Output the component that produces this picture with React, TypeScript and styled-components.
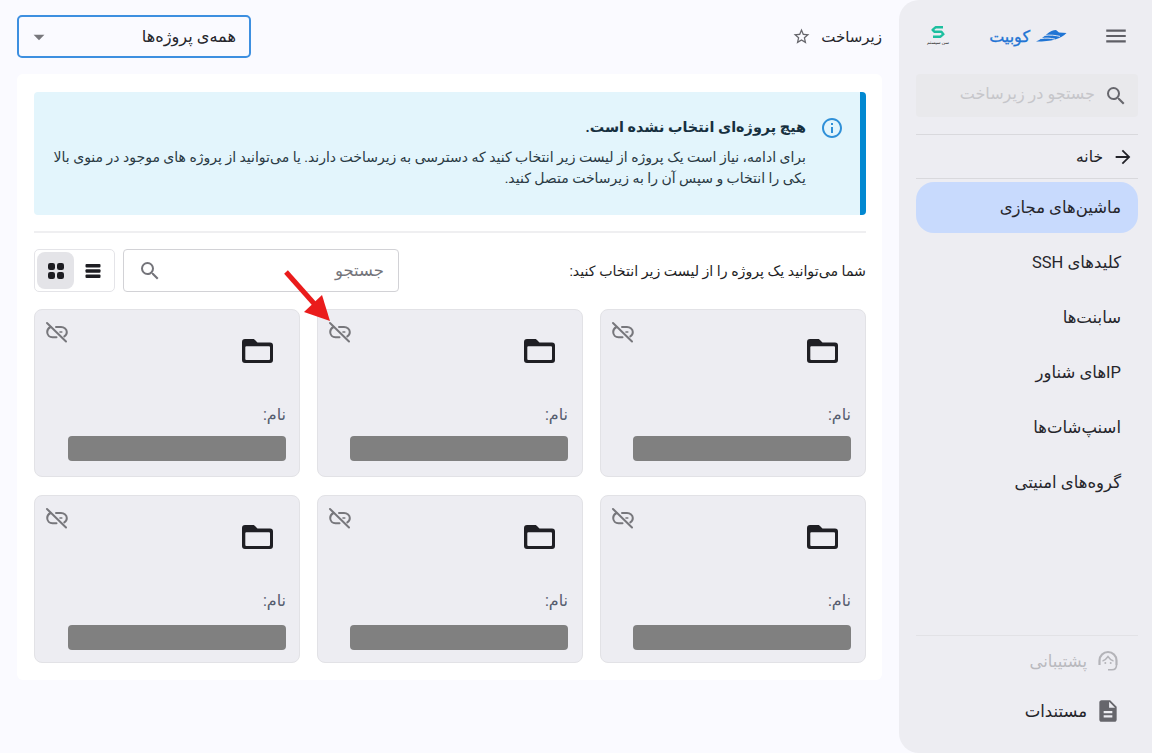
import { createGlobalStyle } from "styled-components";
import styled from "styled-components";
import {
  MdArrowDropDown,
  MdArrowForward,
  MdDescription,
  MdInfoOutline,
  MdMenu,
  MdSearch,
  MdStarBorder,
} from "react-icons/md";

const GlobalStyle = createGlobalStyle`
  html, body { margin: 0; padding: 0; height: 100%; }
  body {
    background: #fafaff;
    font-family: Roboto, "DejaVu Sans", sans-serif;
    color: #1e1e24;
    overflow: hidden;
  }
`;

const Page = styled.div`
  display: flex;
  direction: rtl;
  width: 1152px;
  height: 753px;
  position: relative;
`;

const Sidebar = styled.aside`
  width: 253px;
  height: 753px;
  box-sizing: border-box;
  flex: none;
  background: #ededf2;
  border-top-left-radius: 20px;
  border-bottom-left-radius: 20px;
  padding: 0 14px 0 17px;
  display: flex;
  flex-direction: column;
`;

const BrandRow = styled.div`
  height: 74px;
  display: flex;
  align-items: center;
  padding: 0 9px 2px 0;
  box-sizing: border-box;
`;

const MenuButton = styled.span`
  display: flex;
  color: #5f5f66;
  width: 26px;
  margin-left: 36px;
`;

const BrandName = styled.span`
  display: flex;
  align-items: center;
  gap: 6px;
  color: #1f74d4;
  font-size: 16px;
  -webkit-text-stroke: 0.3px #1f74d4;
  width: 80px;
  flex: none;
`;

const PartnerLogo = styled.span`
  display: flex;
  flex-direction: column;
  align-items: center;
  margin-right: 37px;
  width: 24px;
`;

const PartnerText = styled.span`
  font-size: 4.5px;
  line-height: 7px;
  margin-top: 1px;
  white-space: nowrap;
  color: #222;
`;

const SearchBox = styled.div`
  height: 43px;
  border-radius: 4px;
  background: #e9e9ec;
  display: flex;
  align-items: center;
  gap: 9px;
  padding: 0 10px;
  color: #67676d;
  font-size: 16px;
`;

const SearchHint = styled.span`
  color: #c6c6ca;
  padding-bottom: 4px;
`;

const SearchRule = styled.div`
  height: 1px;
  background: #d9d9dd;
  margin-top: 17px;
`;

const Rule = styled.div<{ $soft?: boolean }>`
  height: 1px;
  background: ${(p) => (p.$soft ? "#e2e2e6" : "#d9d9dd")};
`;

const HomeRow = styled.div`
  height: 43px;
  display: flex;
  align-items: center;
  gap: 9px;
  padding: 0 4px;
  font-size: 15.5px;
  color: #222228;
`;

const NavList = styled.nav`
  display: flex;
  flex-direction: column;
  gap: 4px;
  margin-top: 3px;
  flex: 1;
`;

const NavItem = styled.div<{ $active?: boolean }>`
  height: 51px;
  display: flex;
  align-items: center;
  padding: 0 17px 0 0;
  border-radius: 18px;
  font-size: 16.5px;
  color: #26262c;
  background: ${(p) => (p.$active ? "#c8dafd" : "transparent")};
`;

const SupportBlock = styled.div`
  display: flex;
  flex-direction: column;
  padding-bottom: 17px;
`;

const FootRow = styled.div<{ $muted?: boolean }>`
  height: 50px;
  display: flex;
  align-items: center;
  gap: 8px;
  padding: 0 17px 0 0;
  font-size: 16.5px;
  color: ${(p) => (p.$muted ? "#b9b9be" : "#24242a")};
`;

const FootIcon = styled.span`
  width: 26px;
  display: flex;
  justify-content: center;
`;

const Main = styled.main`
  flex: 1;
  min-width: 0;
  padding: 15px 17px 0;
  display: flex;
  flex-direction: column;
  gap: 16px;
`;

const TopBar = styled.header`
  height: 43px;
  display: flex;
  align-items: center;
  justify-content: space-between;
`;

const PageTitle = styled.div`
  display: flex;
  align-items: center;
  gap: 10px;
  font-size: 15px;
  color: #26262c;
`;

const ProjectSelect = styled.div`
  width: 234px;
  height: 43px;
  box-sizing: border-box;
  border: 2px solid #3d8fe0;
  border-radius: 5px;
  display: flex;
  align-items: center;
  justify-content: space-between;
  padding: 0 13px 0 7px;
  font-size: 16.2px;
  color: #26262c;
`;

const Panel = styled.section`
  background: #fff;
  border-radius: 6px;
  height: 606px;
  box-sizing: border-box;
  padding: 18px 16px 0 17px;
  display: flex;
  flex-direction: column;
`;

const Notice = styled.div`
  height: 123px;
  box-sizing: border-box;
  background: #e3f5fc;
  border-right: 6px solid #0288d1;
  border-radius: 4px;
  display: flex;
  gap: 14px;
  padding: 25px 16px 0 14px;
`;

const NoticeIcon = styled.span`
  display: flex;
  color: #2f90d8;
  flex: none;
  margin-top: -1px;
  height: 24px;
`;

const NoticeTitle = styled.div`
  font-size: 14.4px;
  font-weight: 700;
  line-height: 22px;
  color: #17303f;
`;

const NoticeBody = styled.div`
  font-size: 14px;
  line-height: 21px;
  margin-top: 8px;
  color: #2a3a44;
  white-space: nowrap;
`;

const PanelRule = styled.div`
  height: 2px;
  background: #efeff1;
  margin-top: 16px;
`;

const Toolbar = styled.div`
  height: 43px;
  margin-top: 16px;
  display: flex;
  align-items: center;
  justify-content: space-between;
  font-size: 14.2px;
  color: #1e1e24;
`;

const ToolGroup = styled.div`
  display: flex;
  gap: 8px;
`;

const FilterBox = styled.div`
  width: 276px;
  height: 43px;
  box-sizing: border-box;
  border: 1px solid #d2d2d6;
  border-radius: 4px;
  display: flex;
  align-items: center;
  justify-content: space-between;
  padding: 0 14px;
  font-size: 16.5px;
  color: #74747a;
`;

const ViewToggle = styled.div`
  width: 81px;
  height: 43px;
  box-sizing: border-box;
  border: 1px solid #e4e4e8;
  border-radius: 5px;
  display: flex;
  align-items: center;
  justify-content: space-between;
  padding: 0 3px 0 2px;
`;

const ToggleButton = styled.span<{ $on?: boolean }>`
  width: 37px;
  height: 37px;
  border-radius: 8px;
  display: flex;
  align-items: center;
  justify-content: center;
  background: ${(p) => (p.$on ? "#e4e4e8" : "transparent")};
`;

const ProjectGrid = styled.div`
  display: grid;
  grid-template-columns: repeat(3, 266px);
  grid-template-rows: repeat(2, 168px);
  column-gap: 17px;
  row-gap: 18px;
  margin-top: 17px;
`;

const ProjectCard = styled.article<{ $narrow?: boolean }>`
  background: #ededf2;
  border: 1px solid #e2e2e6;
  border-radius: 8px;
  box-sizing: border-box;
  padding: ${(p) => (p.$narrow ? "0 14px 0 32px" : "0 13px 0 33px")};
  display: flex;
  flex-direction: column;
`;

const CardTop = styled.div<{ $narrow?: boolean }>`
  height: 78px;
  display: flex;
  justify-content: space-between;
  align-items: flex-start;
  margin-left: ${(p) => (p.$narrow ? "-22px" : "-23px")};
  margin-right: 12px;
`;

const FolderGlyph = styled.svg`
  margin-top: 29px;
  margin-right: 1px;
  flex: none;
`;

const LinkGlyph = styled.svg`
  margin-top: 11px;
  flex: none;
`;

const NameLabel = styled.div`
  font-size: 16px;
  line-height: 20px;
  margin-top: 17px;
  color: #565c6e;
`;

const NameMask = styled.div<{ $low?: boolean }>`
  height: 25px;
  margin-top: ${(p) => (p.$low ? "14px" : "11px")};
  border-radius: 4px;
  background: #808080;
`;

const PointerArrow = styled.svg`
  position: absolute;
  left: 280px;
  top: 266px;
`;

const FolderIcon = () => (
  <FolderGlyph width="31" height="24" viewBox="0 0 31 24" fill="#1f1f24">
    <path
      fillRule="evenodd"
      d="M3 0 H11 C12 0 12.5 .5 13 1 L15.5 3.5 H28 A3 3 0 0 1 31 6.5 V21 A3 3 0 0 1 28 24 H3 A3 3 0 0 1 0 21 V3 A3 3 0 0 1 3 0 Z M4.3 7.3 A1 1 0 0 0 3.3 8.3 V20 A1 1 0 0 0 4.3 21 H27 A1 1 0 0 0 28 20 V8.3 A1 1 0 0 0 27 7.3 Z"
    />
  </FolderGlyph>
);

const LinkOffIcon = () => (
  <LinkGlyph width="24" height="22" viewBox="-1 -1 24 22" fill="none" stroke="#77777c" strokeWidth="2" strokeLinecap="round">
    <path d="M1 1 L20 19.5" />
    <path d="M4.5 5 C2.5 6 1.2 8 1.2 10 C1.2 13 3.5 15.2 6.5 15.2 H10.5" />
    <path d="M10 5 H15 C18.2 5 20.8 7.3 20.8 10 C20.8 12 19.8 13.5 18.3 14.4" />
    <path d="M14 10 H15.8" strokeWidth="1.6" />
  </LinkGlyph>
);

const GridIcon = () => (
  <svg width="18" height="18" viewBox="0 0 18 18" fill="#1d1d22">
    <rect x="1" y="1" width="7" height="7" rx="2.2" />
    <rect x="10" y="1" width="7" height="7" rx="2.2" />
    <rect x="1" y="10" width="7" height="7" rx="2.2" />
    <rect x="10" y="10" width="7" height="7" rx="2.2" />
  </svg>
);

const RowsIcon = () => (
  <svg width="18" height="18" viewBox="0 0 18 18" fill="#1d1d22">
    <rect x="1.5" y="2" width="15" height="3.4" rx="1" />
    <rect x="1.5" y="7.3" width="15" height="3.4" rx="1" />
    <rect x="1.5" y="12.6" width="15" height="3.4" rx="1" />
  </svg>
);

const BoatLogo = () => (
  <svg width="31" height="12" viewBox="0 0 31 12" fill="#1f74d4">
    <path d="M11 4 C14 1.5 17 0 20 0 L23 2.6 L30.5 3 C28 6 24 8 19 9.4 C14 10.8 8 11.6 0 11.6 C4.5 9.5 8 6.5 11 4Z" />
    <path d="M9 5.4 C14 4.8 19 5.2 24 6.4" stroke="#ededf2" strokeWidth="0.9" fill="none" />
    <path d="M5 8.6 C10 7.8 14 8 19 9.2" stroke="#ededf2" strokeWidth="0.9" fill="none" />
  </svg>
);

const PartnerMark = () => (
  <svg width="14" height="12" viewBox="0 0 14 12" fill="none" stroke="#1dbf9f" strokeWidth="2.4" strokeLinejoin="round">
    <path d="M12 1.3 H4.5 L1.6 3.8 L3.6 5.8 H10.4 L12.4 8.2 L9.5 10.7 H2" />
  </svg>
);

const SupportIcon = () => (
  <svg width="22" height="22" viewBox="0 0 22 22" fill="none" stroke="#b4b4b9" strokeWidth="2.2">
    <path d="M2.5 15 V10.5 A8.5 8.5 0 0 1 19.5 10.5 V15" />
    <path d="M5.5 11 C8.5 10.5 10 8 11 6.5 C12 8 13.5 10.5 16.5 11" strokeWidth="1.4" />
    <circle cx="8.3" cy="13" r="1" fill="#b4b4b9" stroke="none" />
    <circle cx="13.7" cy="13" r="1" fill="#b4b4b9" stroke="none" />
    <path d="M19.5 15 C19.5 18.5 17.5 19.8 15 19.8 H11" strokeWidth="1.6" />
  </svg>
);

const navItems = ["کلیدهای SSH", "سابنت‌ها", "IPهای شناور", "اسنپ‌شات‌ها", "گروه‌های امنیتی"];

export default function App() {
  return (
    <Page>
      <GlobalStyle />
      <Sidebar>
        <BrandRow>
          <MenuButton>
            <MdMenu size={26} />
          </MenuButton>
          <BrandName>
            <BoatLogo />
            کوبیت
          </BrandName>
          <PartnerLogo>
            <PartnerMark />
            <PartnerText>سن سیستم</PartnerText>
          </PartnerLogo>
        </BrandRow>
        <SearchBox>
          <MdSearch size={24} />
          <SearchHint>جستجو در زیرساخت</SearchHint>
        </SearchBox>
        <SearchRule />
        <HomeRow>
          <MdArrowForward size={22} />
          خانه
        </HomeRow>
        <Rule />
        <NavList>
          <NavItem $active>ماشین‌های مجازی</NavItem>
          {navItems.map((item) => (
            <NavItem key={item}>{item}</NavItem>
          ))}
        </NavList>
        <Rule $soft />
        <SupportBlock>
          <FootRow $muted>
            <FootIcon>
              <SupportIcon />
            </FootIcon>
            پشتیبانی
          </FootRow>
          <FootRow>
            <FootIcon>
              <MdDescription size={26} color="#66666c" />
            </FootIcon>
            مستندات
          </FootRow>
        </SupportBlock>
      </Sidebar>
      <Main>
        <TopBar>
          <PageTitle>
            زیرساخت
            <MdStarBorder size={19} color="#66666c" />
          </PageTitle>
          <ProjectSelect>
            همه‌ی پروژه‌ها
            <MdArrowDropDown size={26} color="#77777c" />
          </ProjectSelect>
        </TopBar>
        <Panel>
          <Notice>
            <NoticeIcon>
              <MdInfoOutline size={24} />
            </NoticeIcon>
            <div>
              <NoticeTitle>هیچ پروژه‌ای انتخاب نشده است.</NoticeTitle>
              <NoticeBody>
                برای ادامه، نیاز است یک پروژه از لیست زیر انتخاب کنید که دسترسی به زیرساخت دارند. یا می‌توانید از پروژه های موجود در منوی بالا
                <br />
                یکی را انتخاب و سپس آن را به زیرساخت متصل کنید.
              </NoticeBody>
            </div>
          </Notice>
          <PanelRule />
          <Toolbar>
            شما می‌توانید یک پروژه را از لیست زیر انتخاب کنید:
            <ToolGroup>
              <FilterBox>
                جستجو
                <MdSearch size={24} />
              </FilterBox>
              <ViewToggle>
                <ToggleButton>
                  <RowsIcon />
                </ToggleButton>
                <ToggleButton $on>
                  <GridIcon />
                </ToggleButton>
              </ViewToggle>
            </ToolGroup>
          </Toolbar>
          <ProjectGrid>
            {[0, 1, 2, 3, 4, 5].map((id) => (
              <ProjectCard key={id} $narrow={id % 3 !== 2}>
                <CardTop $narrow={id % 3 !== 2}>
                  <FolderIcon />
                  <LinkOffIcon />
                </CardTop>
                <NameLabel>نام:</NameLabel>
                <NameMask $low={id > 2} />
              </ProjectCard>
            ))}
          </ProjectGrid>
        </Panel>
      </Main>
      <PointerArrow width="56" height="60" viewBox="0 0 56 60">
        <path d="M6 6 L38 42" stroke="#ea1c1c" strokeWidth="5" />
        <path d="M50 55 L24 46 L42 29 Z" fill="#ea1c1c" />
      </PointerArrow>
    </Page>
  );
}
